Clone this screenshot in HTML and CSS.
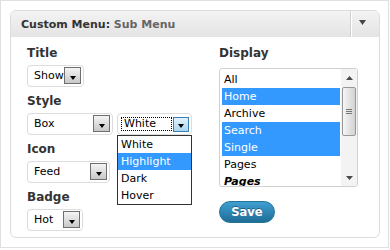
FILE: index.html
```html
<!DOCTYPE html>
<html>
  <head>
    <title>Custom Menu</title>
    <link rel="stylesheet" href="styles.css">
  </head>
  <body>
    <div class="frame">
      <div class="widget">
        <div class="widget-top">
          <h3 class="widget-title">Custom Menu: <span>Sub Menu</span></h3>
          <div class="widget-toggle">
            <svg width="7" height="5" viewBox="0 0 7 5"><path d="M0 0h7L3.5 5z" fill="#464646"/></svg>
          </div>
        </div>
        <div class="widget-inside">
          <div class="col-left">
            <div class="field">
              <label>Title</label>
              <div class="select w-show"><span class="value">Show</span><span class="btn"><i class="tri"></i></span></div>
            </div>
            <div class="field">
              <label>Style</label>
              <div class="row">
                <div class="select w-box"><span class="value">Box</span><span class="btn"><i class="tri"></i></span></div>
                <div class="select w-white focus">
                  <span class="value">White</span><span class="btn"><i class="tri"></i></span>
                  <ul class="dropdown">
                    <li>White</li>
                    <li class="sel">Highlight</li>
                    <li>Dark</li>
                    <li>Hover</li>
                  </ul>
                </div>
              </div>
            </div>
            <div class="field">
              <label>Icon</label>
              <div class="select w-feed"><span class="value">Feed</span><span class="btn"><i class="tri"></i></span></div>
            </div>
            <div class="field">
              <label>Badge</label>
              <div class="select w-hot"><span class="value">Hot</span><span class="btn"><i class="tri"></i></span></div>
            </div>
          </div>
          <div class="col-right">
            <label class="display-label">Display</label>
            <div class="listbox">
              <ul class="options">
                <li>All</li>
                <li class="sel">Home</li>
                <li>Archive</li>
                <li class="sel">Search</li>
                <li class="sel">Single</li>
                <li>Pages</li>
                <li class="group">Pages</li>
              </ul>
              <div class="scrollbar">
                <div class="sb-btn"><svg width="7" height="4" viewBox="0 0 7 4"><path d="M0 4h7L3.5 0z" fill="#4a4a4a"/></svg></div>
                <div class="sb-thumb"><i></i><i></i><i></i></div>
                <div class="sb-space"></div>
                <div class="sb-btn"><svg width="7" height="4" viewBox="0 0 7 4"><path d="M0 0h7L3.5 4z" fill="#4a4a4a"/></svg></div>
              </div>
            </div>
            <button class="save">Save</button>
          </div>
        </div>
      </div>
    </div>
  </body>
</html>
```

FILE: styles.css
```css
body{
  margin: 0;
  background: #fff;
  font-family: "DejaVu Sans", Verdana, sans-serif;
  font-size: 11px;
  color: #000;
}
.frame{
  width: 389px;
  height: 248px;
  box-sizing: border-box;
  border: 1px solid #dfdfdf;
  padding: 9px;
}
.widget{
  width: 370px;
  height: 228px;
  box-sizing: border-box;
  border: 1px solid #dcdcdc;
  border-radius: 6px;
}
.widget-top{
  display: flex;
  height: 26px;
  background: linear-gradient(#f3f3f3, #e4e4e4);
  border-radius: 5px 5px 0 0;
}
.widget-title{
  flex: 1;
  margin: 0;
  padding-left: 10px;
  height: 26px;
  line-height: 28px;
  font-size: 11px;
  font-weight: bold;
  color: #333;
}
.widget-title span{
  color: #666;
}
.widget-toggle{
  width: 29px;
  border-left: 1px solid #cfcfcf;
  box-shadow: inset 1px 0 #fff;
  padding: 9px 0 0 8px;
  box-sizing: border-box;
}
.widget-toggle svg{
  display: block;
}
.widget-inside{
  display: flex;
  padding: 8px 16px 0;
}
.col-left{
  width: 192px;
}
.field{
  margin-bottom: 6px;
}
label{
  display: block;
  font-size: 12px;
  font-weight: bold;
  line-height: 16px;
  margin-bottom: 4px;
  color: #333;
}
.row{
  display: flex;
  gap: 4px;
}
.select{
  position: relative;
  display: flex;
  align-items: flex-start;
  height: 22px;
  box-sizing: border-box;
  border: 1px solid #dcdcdc;
  border-radius: 4px;
  padding: 0 2px 0 6px;
  background: #fff;
}
.select .value{
  flex: 1;
  line-height: 20px;
  white-space: nowrap;
}
.btn{
  display: flex;
  align-items: flex-end;
  justify-content: center;
  width: 17px;
  height: 17px;
  margin-top: 1px;
  box-sizing: border-box;
  border: 1px solid #6f6f6f;
  background: linear-gradient(#f4f4f4, #c8c8c8);
  padding-bottom: 3px;
}
.tri{
  width: 0;
  height: 0;
  border-left: 3.5px solid transparent;
  border-right: 3.5px solid transparent;
  border-top: 4px solid #000;
}
.w-show{ width: 57px; }
.w-box{ width: 86px; }
.w-white{ width: 75px; }
.w-feed{ width: 83px; }
.w-hot{ width: 56px; }

.focus{
  padding-left: 3px;
}
.focus .value{
  flex: none;
  width: 51px;
  height: 14px;
  box-sizing: border-box;
  margin: 3px 1px 0 0;
  border: 1px dotted #000;
  padding-left: 2px;
  line-height: 12px;
}
.focus .btn{
  width: 16px;
  height: 15px;
  margin-top: 3px;
  border-color: #3c7fb1;
  background: linear-gradient(#e3f2fb, #a9d5ef);
  padding-bottom: 3px;
}
.dropdown{
  position: absolute;
  top: 21px;
  left: -1px;
  width: 75px;
  box-sizing: border-box;
  margin: 0;
  padding: 0;
  list-style: none;
  border: 1px solid #333;
  background: #fff;
  z-index: 2;
}
.dropdown li{
  line-height: 17px;
  padding-left: 3px;
}
.sel{
  background: #3399ff;
  color: #fff;
}

.col-right{
  flex: 1;
}
.display-label{
  margin-bottom: 7px;
}
.listbox{
  display: flex;
  width: 139px;
  height: 119px;
  box-sizing: border-box;
  border: 1px solid #d0d0d0;
  border-radius: 3px;
  overflow: hidden;
}
.options{
  width: 118px;
  margin: 2px 1px 0 2px;
  padding: 0;
  list-style: none;
}
.options li{
  line-height: 17px;
  padding-left: 2px;
  white-space: nowrap;
}
.options .group{
  font-weight: bold;
  font-style: italic;
}
.scrollbar{
  display: flex;
  flex-direction: column;
  width: 16px;
  background: #f3f3f3;
}
.sb-btn{
  display: flex;
  align-items: center;
  justify-content: center;
  height: 17px;
}
.sb-thumb{
  display: flex;
  flex-direction: column;
  align-items: center;
  justify-content: center;
  gap: 1px;
  height: 49px;
  margin: 1px 1px 0 1px;
  box-sizing: border-box;
  border: 1px solid #989898;
  border-radius: 2px;
  background: linear-gradient(90deg, #f6f6f6, #d2d2d2);
}
.sb-thumb i{
  width: 6px;
  height: 1px;
  background: #777;
}
.sb-space{
  flex: 1;
}
.save{
  display: block;
  margin-top: 14px;
  width: 56px;
  height: 22px;
  padding: 0;
  border: 1px solid #21759b;
  border-radius: 11px;
  background: linear-gradient(#409fd1, #1f6d96);
  color: #fff;
  font-family: "DejaVu Sans", Verdana, sans-serif;
  font-size: 11.5px;
  font-weight: bold;
  text-shadow: 0 -1px 0 rgba(0,0,0,.35);
}
```
